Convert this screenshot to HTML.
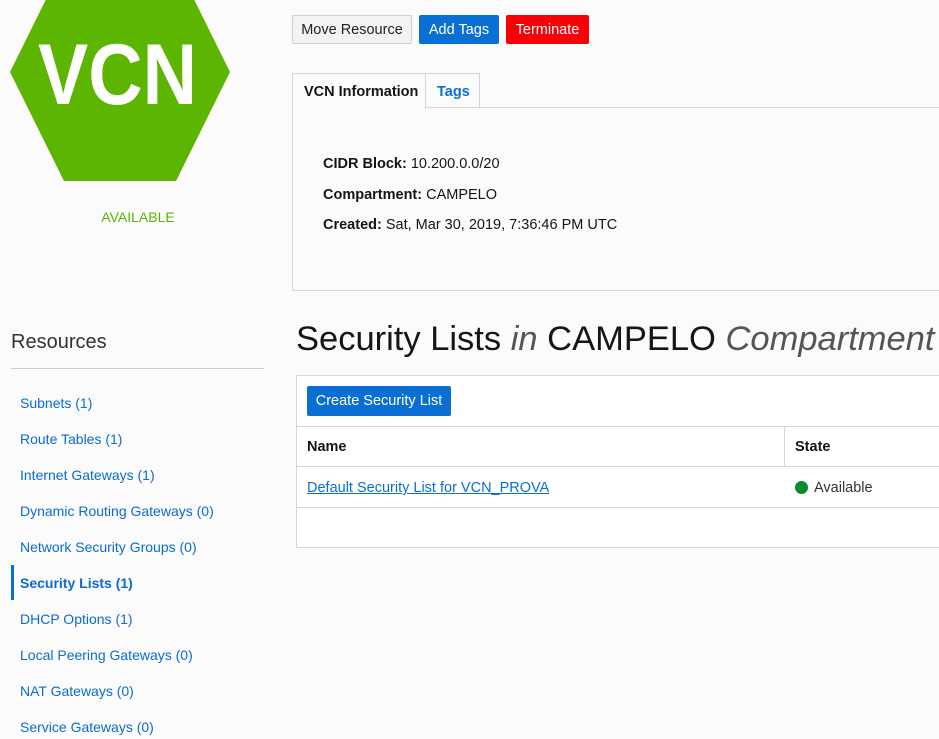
<!DOCTYPE html>
<html><head><meta charset="utf-8"><style>
*{box-sizing:border-box;margin:0;padding:0}
body{width:939px;height:739px;overflow:hidden;background:#fbfbfb;font-family:"Liberation Sans",Arial,sans-serif;color:#161513;position:relative}
.abs{position:absolute}
.btn{position:absolute;top:15px;height:29px;border-radius:2px;font-size:14.5px;line-height:30px;text-align:center}
.side a{position:absolute;left:20px;font-size:14px;color:#0b6bd0;text-decoration:none}
</style></head><body>
<svg class="abs" style="left:0;top:0" width="280" height="200">
<polygon points="10,72 64,-37 176,-37 230,72 176,181 64,181" fill="#5cb500"/>
<text x="38" y="104" textLength="159" lengthAdjust="spacingAndGlyphs" font-family="Liberation Sans" font-weight="bold" font-size="86" fill="#fff">VCN</text>
</svg>
<div class="abs" style="left:0;width:276px;top:209px;text-align:center;color:#5cb500;font-size:14px">AVAILABLE</div>

<div class="btn" style="left:292px;width:120px;background:#f3f3f3;border:1px solid #cfcfcf;color:#222;line-height:28px">Move Resource</div>
<div class="btn" style="left:419px;width:80px;background:#0a6fd4;color:#fff">Add Tags</div>
<div class="btn" style="left:506px;width:83px;background:#f70008;color:#fff">Terminate</div>

<div class="abs" style="left:292px;top:107px;width:660px;height:184px;border:1px solid #d5d5da;border-right:none;background:#fbfbfb"></div>
<div class="abs" style="left:292px;top:73px;width:134px;height:36px;border:1px solid #d5d5da;border-bottom:none;background:#fbfbfb;font-weight:bold;font-size:14.5px;padding:10px 0 0 11px">VCN Information</div>
<div class="abs" style="left:425px;top:73px;width:55px;height:35px;border:1px solid #d5d5da;background:#fbfbfb;color:#0a6fd4;font-weight:bold;font-size:14.5px;padding:10px 0 0 11px">Tags</div>
<div class="abs" style="left:323px;top:149px;font-size:14.5px;line-height:30.5px"><b>CIDR Block:</b> 10.200.0.0/20<br><b>Compartment:</b> CAMPELO<br><b>Created:</b> Sat, Mar 30, 2019, 7:36:46 PM UTC</div>

<div class="abs" style="left:11px;top:331px;font-size:20px;color:#333">Resources</div>
<div class="abs" style="left:11px;top:368px;width:253px;height:1px;background:#ccc"></div>
<div class="side">
<a style="top:395px">Subnets (1)</a>
<a style="top:431px">Route Tables (1)</a>
<a style="top:467px">Internet Gateways (1)</a>
<a style="top:503px">Dynamic Routing Gateways (0)</a>
<a style="top:539px">Network Security Groups (0)</a>
<a style="top:575px;font-weight:bold">Security Lists (1)</a>
<a style="top:611px">DHCP Options (1)</a>
<a style="top:647px">Local Peering Gateways (0)</a>
<a style="top:683px">NAT Gateways (0)</a>
<a style="top:719px">Service Gateways (0)</a>
</div>
<div class="abs" style="left:11px;top:565px;width:3px;height:35px;background:#0a6fd4"></div>

<div class="abs" style="left:296px;top:320px;font-size:34.5px;white-space:nowrap;color:#161513">Security Lists <i style="color:#555">in</i> CAMPELO <i style="color:#555">Compartment</i></div>

<div class="abs" style="left:296px;top:375px;width:660px;height:173px;border:1px solid #d5d5da;border-right:none;background:#fff"></div>
<div class="abs" style="left:307px;top:386px;width:144px;height:30px;background:#0a6fd4;border-radius:2px;color:#fff;font-size:14.5px;line-height:30px;text-align:center">Create Security List</div>
<div class="abs" style="left:297px;top:426px;width:650px;height:1px;background:#d5d5da"></div>
<div class="abs" style="left:297px;top:466px;width:650px;height:1px;background:#d5d5da"></div>
<div class="abs" style="left:297px;top:507px;width:650px;height:1px;background:#d5d5da"></div>
<div class="abs" style="left:784px;top:427px;width:1px;height:39px;background:#d5d5da"></div>
<div class="abs" style="left:307px;top:439px;font-weight:bold;font-size:14.5px">Name</div>
<div class="abs" style="left:795px;top:439px;font-weight:bold;font-size:14.5px">State</div>
<a class="abs" style="left:307px;top:480px;font-size:14.5px;color:#0a6fd4;text-decoration:underline">Default Security List for VCN_PROVA</a>
<div class="abs" style="left:795px;top:481px;width:13px;height:13px;border-radius:50%;background:#0a8a2e"></div>
<div class="abs" style="left:814px;top:480px;font-size:14.5px;color:#333">Available</div>
</body></html>
